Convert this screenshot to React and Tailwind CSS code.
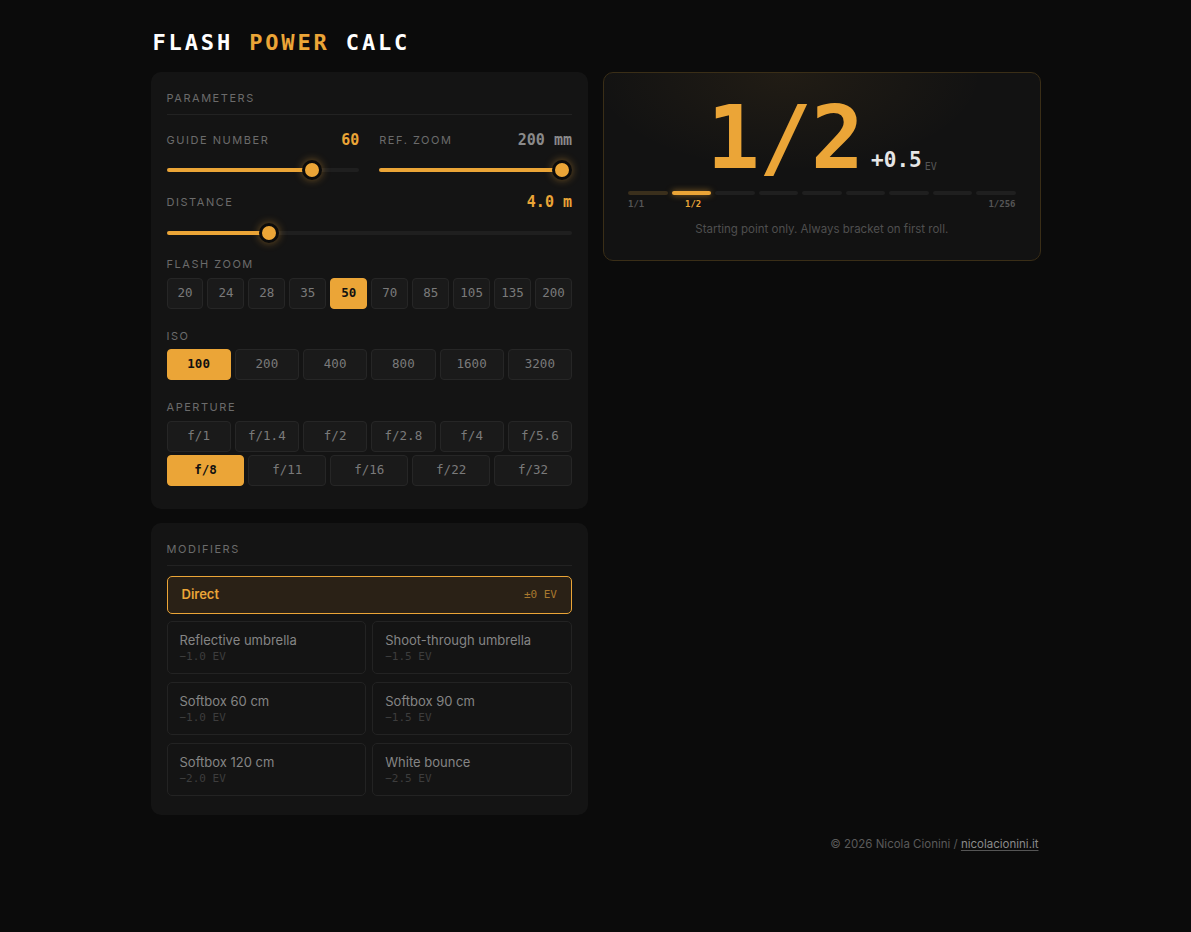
import React from 'react';

const mono = { fontFamily: '"DejaVu Sans Mono", "Liberation Mono", monospace' };

function Label({ children }) {
  return (
    <div className="text-[11px] leading-4 tracking-[0.14em] uppercase text-[#6b6b6b]" style={{ fontFamily: 'Inter, "Noto Sans", sans-serif' }}>
      {children}
    </div>
  );
}

function Slider({ pct }) {
  return (
    <div className="relative h-5">
      <div className="absolute left-0 right-0 top-[8px] h-[4px] rounded-full bg-[#1f1f1f]" />
      <div className="absolute left-0 top-[8px] h-[4px] rounded-full bg-[#eba537]" style={{ width: `calc(${pct} * (100% - 20px) + 10px)` }} />
      <div
        className="absolute top-0 w-5 h-5 rounded-full bg-[#eba537] border-[3px] border-[#0b0b0b] shadow-[0_0_8px_rgba(235,165,55,0.45)]"
        style={{ left: `calc(${pct} * (100% - 20px))` }}
      />
    </div>
  );
}

function Chip({ label, active }) {
  return (
    <div
      className={`h-[31px] flex items-center justify-center rounded-[4px] border text-[12.5px] ${
        active ? 'bg-[#eba537] border-[#eba537] text-[#111] font-bold' : 'bg-[#1a1a1a] border-[#262626] text-[#7a7a7a]'
      }`}
      style={mono}
    >
      {label}
    </div>
  );
}

const zooms = ['20', '24', '28', '35', '50', '70', '85', '105', '135', '200'];
const isos = ['100', '200', '400', '800', '1600', '3200'];
const ap1 = ['f/1', 'f/1.4', 'f/2', 'f/2.8', 'f/4', 'f/5.6'];
const ap2 = ['f/8', 'f/11', 'f/16', 'f/22', 'f/32'];
const mods = [
  ['Reflective umbrella', '−1.0 EV'],
  ['Shoot-through umbrella', '−1.5 EV'],
  ['Softbox 60 cm', '−1.0 EV'],
  ['Softbox 90 cm', '−1.5 EV'],
  ['Softbox 120 cm', '−2.0 EV'],
  ['White bounce', '−2.5 EV'],
];

export default function App() {
  return (
    <div className="min-h-[932px] bg-[#0b0b0b] text-white" style={{ fontFamily: 'Inter, "Noto Sans", sans-serif' }}>
      <div className="w-[890px] mx-auto pt-[29px]">
        <h1 className="text-[22px] leading-7 font-bold tracking-[0.13em] ml-[2px]" style={mono}>
          FLASH <span className="text-[#eba537]">POWER</span> CALC
        </h1>

        <div className="grid grid-cols-2 gap-[15px] mt-[15px] items-start">
          <div className="flex flex-col gap-[14px]">
            {/* Parameters */}
            <div className="bg-[#141414] rounded-[10px] px-4 pt-[18px] pb-[23px]">
              <Label>Parameters</Label>
              <div className="h-px bg-[#222] mt-[8px]" />

              <div className="grid grid-cols-2 gap-5 mt-[15px]">
                <div>
                  <div className="flex justify-between items-center h-5">
                    <Label>Guide number</Label>
                    <span className="text-[15px] font-bold text-[#eba537]" style={mono}>60</span>
                  </div>
                  <div className="mt-[10px]">
                    <Slider pct={0.786} />
                  </div>
                </div>
                <div>
                  <div className="flex justify-between items-center h-5">
                    <Label>Ref. zoom</Label>
                    <span className="text-[15px] font-bold text-[#8a8a8a]" style={mono}>200 mm</span>
                  </div>
                  <div className="mt-[10px]">
                    <Slider pct={1} />
                  </div>
                </div>
              </div>

              <div className="flex justify-between items-center h-5 mt-[12px]">
                <Label>Distance</Label>
                <span className="text-[15px] font-bold text-[#eba537]" style={mono}>4.0 m</span>
              </div>
              <div className="mt-[11px]">
                <Slider pct={0.24} />
              </div>

              <div className="mt-[13px]">
                <Label>Flash zoom</Label>
              </div>
              <div className="grid grid-cols-10 gap-[4px] mt-[6px]">
                {zooms.map((z) => (
                  <Chip key={z} label={z} active={z === '50'} />
                ))}
              </div>

              <div className="mt-[19px]">
                <Label>ISO</Label>
              </div>
              <div className="grid grid-cols-6 gap-[4px] mt-[5px]">
                {isos.map((z) => (
                  <Chip key={z} label={z} active={z === '100'} />
                ))}
              </div>

              <div className="mt-[19px]">
                <Label>Aperture</Label>
              </div>
              <div className="grid grid-cols-6 gap-[4px] mt-[6px]">
                {ap1.map((z) => (
                  <Chip key={z} label={z} />
                ))}
              </div>
              <div className="grid grid-cols-5 gap-[4px] mt-[3px]">
                {ap2.map((z) => (
                  <Chip key={z} label={z} active={z === 'f/8'} />
                ))}
              </div>
            </div>

            {/* Modifiers */}
            <div className="bg-[#141414] rounded-[10px] px-4 pt-[18px] pb-[19px]">
              <Label>Modifiers</Label>
              <div className="h-px bg-[#222] mt-[8px]" />
              <div className="mt-[10px] h-[38px] rounded-[5px] border border-[#eba537] bg-[#2a2116] flex items-center justify-between px-[14px]">
                <span className="text-[13px] font-semibold text-[#eba537]">Direct</span>
                <span className="text-[11px] text-[#a8782e]" style={mono}>±0 EV</span>
              </div>
              <div className="grid grid-cols-2 gap-x-[6px] gap-y-[8px] mt-[7px]">
                {mods.map(([n, ev]) => (
                  <div key={n} className="h-[53px] rounded-[5px] border border-[#232323] bg-[#141414] px-[12px] pt-[10px]">
                    <div className="text-[13px] leading-4 text-[#858585]">{n}</div>
                    <div className="text-[11px] leading-4 text-[#3d3d3d] mt-[1px]" style={mono}>{ev}</div>
                  </div>
                ))}
              </div>
            </div>
          </div>

          {/* Result */}
          <div className="rounded-[10px] border border-[#3a2e17] bg-[#121212] bg-[radial-gradient(ellipse_60%_70%_at_42%_0%,rgba(235,165,55,0.07),transparent_75%)] px-6 pt-[19px] pb-[23px]">
            <div className="flex items-end justify-center h-[90px]">
              <span className="text-[88px] leading-[88px] font-bold text-[#eba537] tracking-[-0.01em]" style={mono}>1/2</span>
              <span className="text-[21px] font-bold text-[#e6e6e6] ml-[8px] mb-[6px]" style={mono}>+0.5</span>
              <span className="text-[10px] text-[#555] ml-[3px] mb-[8px]" style={mono}>EV</span>
            </div>
            <div className="grid grid-cols-9 gap-[4px] mt-[9px]">
              {Array.from({ length: 9 }).map((_, i) => (
                <div
                  key={i}
                  className={`h-[4px] rounded-full ${
                    i === 1 ? 'bg-[#eba537] shadow-[0_0_6px_rgba(235,165,55,0.6)]' : i === 0 ? 'bg-[#3a2f1c]' : 'bg-[#1f1f1f]'
                  }`}
                />
              ))}
            </div>
            <div className="relative h-4 mt-[3px] text-[9px] font-bold" style={mono}>
              <span className="absolute left-0 top-0 text-[#555]">1/1</span>
              <span className="absolute left-[57px] top-0 text-[#eba537]">1/2</span>
              <span className="absolute right-0 top-0 text-[#555]">1/256</span>
            </div>
            <div className="text-center text-[11.5px] leading-4 text-[#4f4f4f] mt-[7px]">
              Starting point only. Always bracket on first roll.
            </div>
          </div>
        </div>

        <div className="flex justify-end mt-[21px] pr-[2px] text-[11.5px] text-[#5a5a5a]">
          <span>
            © 2026 Nicola Cionini / <span className="text-[#8a8a8a] underline underline-offset-2 decoration-[#555]">nicolacionini.it</span>
          </span>
        </div>
      </div>
    </div>
  );
}
